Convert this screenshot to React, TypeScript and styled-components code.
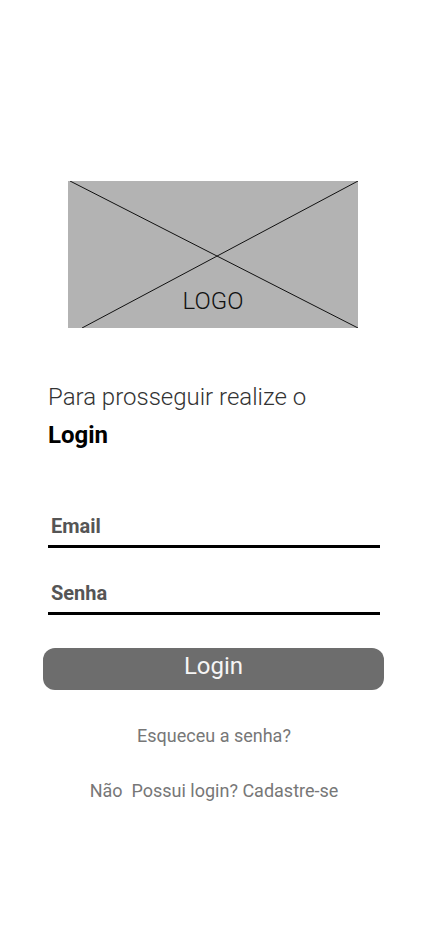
import React from 'react';
import styled, { createGlobalStyle } from 'styled-components';

const GlobalStyle = createGlobalStyle`
  html, body {
    margin: 0;
    padding: 0;
    background: #ffffff;
    font-family: Roboto, 'Noto Sans', sans-serif;
  }
`;

const PageContainer = styled.div`
  width: 428px;
  min-height: 926px;
  box-sizing: border-box;
  padding: 181px 48px 0 48px;
  display: flex;
  flex-direction: column;
`;

const LogoBox = styled.div`
  position: relative;
  width: 290px;
  height: 147px;
  margin-left: 20px;
  background-color: #b3b3b3;
  display: flex;
  align-items: flex-end;
  justify-content: center;
  overflow: hidden;

  svg {
    position: absolute;
    inset: 0;
  }
`;

const LogoText = styled.span`
  position: relative;
  font-size: 24px;
  font-weight: 300;
  color: #111;
  line-height: 24px;
  margin-bottom: 15px;
`;

const Heading = styled.div`
  margin-top: 50px;
  font-size: 24px;
  line-height: 38px;
`;

const Lead = styled.div`
  font-weight: 300;
  color: #333;
`;

const Strong = styled.div`
  font-weight: 700;
  color: #000;
`;

const Form = styled.form`
  margin-top: 60px;
  display: flex;
  flex-direction: column;
  gap: 33px;
`;

const Field = styled.label`
  display: flex;
  flex-direction: column;
  border-bottom: 3px solid #000;
  padding: 0 0 7px 3px;

  span {
    font-size: 20px;
    font-weight: 700;
    line-height: 24px;
    color: #555;
  }
`;

const LoginButton = styled.button`
  margin: 0 0 0 -5px;
  width: 341px;
  height: 42px;
  border: none;
  border-radius: 12px;
  background-color: #6d6d6d;
  color: #f5f5f5;
  font-family: Roboto, sans-serif;
  font-size: 24px;
  font-weight: 400;
  padding: 0 0 6px;
  cursor: pointer;
`;

const LinkText = styled.a<{ gap: number }>`
  display: block;
  margin-top: ${props => props.gap}px;
  text-align: center;
  font-size: 18px;
  line-height: 20px;
  color: #777;
  text-decoration: none;
  white-space: pre;
`;

const App: React.FC = () => {
  return (
    <>
      <GlobalStyle />
      <PageContainer>
        <LogoBox>
          <svg width="290" height="147" viewBox="0 0 290 147">
            <line x1="2" y1="0" x2="290" y2="147" stroke="#111" strokeWidth="1" />
            <line x1="290" y1="0" x2="14" y2="147" stroke="#111" strokeWidth="1" />
          </svg>
          <LogoText>LOGO</LogoText>
        </LogoBox>

        <Heading>
          <Lead>Para prosseguir realize o</Lead>
          <Strong>Login</Strong>
        </Heading>

        <Form onSubmit={e => e.preventDefault()}>
          <Field>
            <span>Email</span>
          </Field>
          <Field>
            <span>Senha</span>
          </Field>
          <LoginButton type="submit">Login</LoginButton>
        </Form>

        <LinkText gap={36}>Esqueceu a senha?</LinkText>
        <LinkText gap={35}>Não  Possui login? Cadastre-se</LinkText>
      </PageContainer>
    </>
  );
};

export default App;
